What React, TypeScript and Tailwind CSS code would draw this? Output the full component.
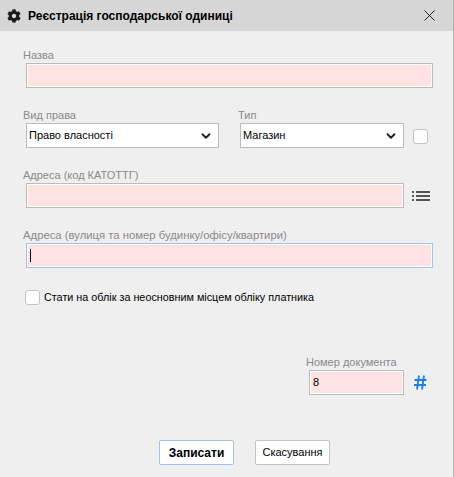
import { ChevronDown } from "lucide-react";
import { FaCog } from "react-icons/fa";

const fieldLabel = "block h-[15px] text-[11px] leading-[15px] text-[#8a8a8a] whitespace-nowrap";
const pinkField = "h-[25px] bg-[#ffe2e2] border shadow-[inset_0_0_0_1px_#fff]";

function Select({ value, width }: { value: string; width: string }) {
  return (
    <div className={`${width} h-[25px] bg-white border border-[#bbbbbb] flex items-center justify-between pl-[2px] pr-[5px] text-[11px] text-black`}>
      <span>{value}</span>
      <ChevronDown className="w-[14px] h-[14px] text-[#222]" strokeWidth={3.2} />
    </div>
  );
}

function Checkbox() {
  return <div className="w-[15px] h-[15px] bg-white border border-[#c4c4c4] rounded-[3px] shrink-0" />;
}

export default function App() {
  return (
    <div className="w-[454px] h-[477px] bg-[#efefef] border-r border-[#b4b4b4] overflow-hidden" style={{ fontFamily: "'Liberation Sans', sans-serif" }}>
      {/* Title bar */}
      <div className="h-[31px] bg-[#d6d6d6] flex items-center pl-[7px] pr-[18px]">
        <FaCog className="w-[14px] h-[14px] text-[#1a1a1a]" />
        <span className="ml-[7px] text-[12px] font-bold text-black">Реєстрація господарської одиниці</span>
        <svg className="ml-auto w-[11px] h-[11px]" viewBox="0 0 11 11">
          <path d="M0.5 0.5L10.5 10.5M10.5 0.5L0.5 10.5" stroke="#111" strokeWidth="0.9" fill="none" />
        </svg>
      </div>

      <div className="pl-[26px] pt-[17px] flex flex-col">
        <label className={`${fieldLabel} -ml-[3px]`}>Назва</label>
        <div className={`${pinkField} w-[407px] border-[#bbbbbb]`} />

        <div className="flex mt-[20px]">
          <div>
            <label className={`${fieldLabel} -ml-[3px]`}>Вид права</label>
            <Select value="Право власності" width="w-[193px]" />
          </div>
          <div className="ml-[21px]">
            <label className={`${fieldLabel} -ml-[2px]`}>Тип</label>
            <Select value="Магазин" width="w-[164px]" />
          </div>
          <div className="ml-[9px] mt-[21px]">
            <Checkbox />
          </div>
        </div>

        <label className={`${fieldLabel} -ml-[3px] mt-[20px]`}>Адреса (код КАТОТТГ)</label>
        <div className="flex items-start">
          <div className={`${pinkField} w-[378px] border-[#bbbbbb]`} />
          <svg className="ml-[8px] mt-[8px] w-[18px] h-[10px] text-[#555]" viewBox="0 0 18 10" fill="currentColor">
            <rect x="0" y="0" width="2" height="2" />
            <rect x="4" y="0" width="14" height="2" />
            <rect x="0" y="4" width="2" height="2" />
            <rect x="4" y="4" width="14" height="2" />
            <rect x="0" y="8" width="2" height="2" />
            <rect x="4" y="8" width="14" height="2" />
          </svg>
        </div>

        <label className="block h-[15px] text-[11.3px] leading-[15px] text-[#8a8a8a] whitespace-nowrap -ml-[3px] mt-[20px]">Адреса (вулиця та номер будинку/офісу/квартири)</label>
        <div className={`${pinkField} w-[407px] border-[#9cc4ec] flex items-center pl-[3px]`}>
          <div className="w-px h-[13px] bg-black" />
        </div>

        <div className="flex items-center mt-[21px] -ml-[1px]">
          <Checkbox />
          <span className="ml-[4px] text-[10.8px] text-black whitespace-nowrap">Стати на облік за неосновним місцем обліку платника</span>
        </div>

        <div className="flex flex-col ml-[283px] mt-[50px]">
          <label className={`${fieldLabel} -ml-[3px]`}>Номер документа</label>
          <div className="flex items-center">
            <div className={`${pinkField} w-[95px] border-[#bbbbbb] flex items-center pl-[3px] text-[11px] text-black`}>8</div>
            <svg className="ml-[10px] w-[13px] h-[15px] text-[#1b80ee]" viewBox="0 0 13 15" fill="none" stroke="currentColor" strokeWidth="1.8">
              <path d="M5 0.5L3 14.5M10 0.5L8 14.5M0.5 5H12.5M0 10H12" />
            </svg>
          </div>
        </div>

        <div className="flex mt-[45px] ml-[133px]">
          <button className="w-[75px] h-[25px] bg-white border border-[#9cc4ec] rounded-[2px] text-[12px] font-bold text-black">Записати</button>
          <button className="ml-[21px] w-[75px] h-[25px] bg-white border border-[#c4c4c4] rounded-[2px] text-[11px] text-black">Скасування</button>
        </div>
      </div>
    </div>
  );
}
